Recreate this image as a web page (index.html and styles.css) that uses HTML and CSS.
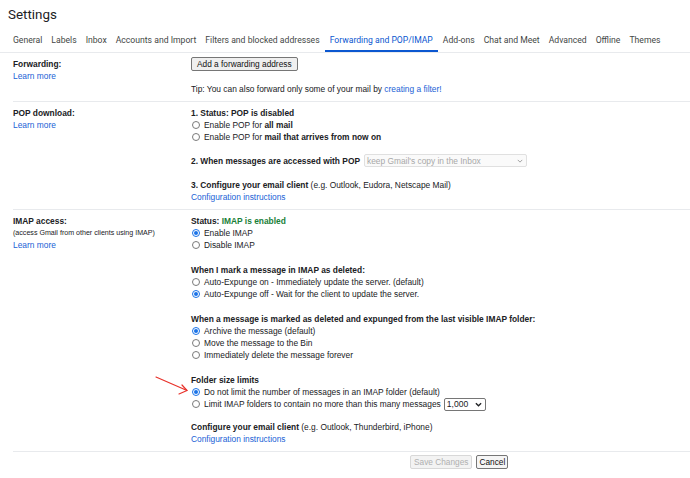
FILE: index.html
```html
<!DOCTYPE html>
<html lang="en">
<head>
<meta charset="utf-8">
<title>Settings</title>
<link rel="stylesheet" href="styles.css">
</head>
<body>
<div class="page">
  <h1 class="title">Settings</h1>
  <nav class="tabs">
    <span class="tab">General</span>
    <span class="tab">Labels</span>
    <span class="tab">Inbox</span>
    <span class="tab">Accounts and Import</span>
    <span class="tab">Filters and blocked addresses</span>
    <span class="tab active">Forwarding and POP/IMAP</span>
    <span class="tab">Add-ons</span>
    <span class="tab">Chat and Meet</span>
    <span class="tab">Advanced</span>
    <span class="tab">Offline</span>
    <span class="tab">Themes</span>
  </nav>

  <section class="row fwd">
    <div class="label">
      <div class="b">Forwarding:</div>
      <a class="link">Learn more</a>
    </div>
    <div class="content">
      <div class="group"><button class="btn">Add a forwarding address</button></div>
      <div class="group"><div>Tip: You can also forward only some of your mail by <a class="link">creating a filter!</a></div></div>
    </div>
  </section>

  <section class="row pop">
    <div class="label">
      <div class="b">POP download:</div>
      <a class="link">Learn more</a>
    </div>
    <div class="content">
      <div class="group">
        <div class="b">1. Status: POP is disabled</div>
        <label class="opt"><span class="radio"></span><span>Enable POP for <b>all mail</b></span></label>
        <label class="opt"><span class="radio"></span><span>Enable POP for <b>mail that arrives from now on</b></span></label>
      </div>
      <div class="group">
        <div class="selrow"><b>2. When messages are accessed with POP</b><span class="select disabled wide">keep Gmail's copy in the Inbox<svg class="chev" viewBox="0 0 8 5" width="6" height="4"><path d="M1 1l3 3 3-3" fill="none" stroke="currentColor" stroke-width="1.2"/></svg></span></div>
      </div>
      <div class="group">
        <div><b>3. Configure your email client</b> (e.g. Outlook, Eudora, Netscape Mail)</div>
        <a class="link">Configuration instructions</a>
      </div>
    </div>
  </section>

  <section class="row imap">
    <div class="label">
      <div class="b">IMAP access:</div>
      <div class="small">(access Gmail from other clients using IMAP)</div>
      <a class="link">Learn more</a>
    </div>
    <div class="content">
      <div class="group">
        <div><b>Status: <span class="green">IMAP is enabled</span></b></div>
        <label class="opt"><span class="radio on"></span><span>Enable IMAP</span></label>
        <label class="opt"><span class="radio"></span><span>Disable IMAP</span></label>
      </div>
      <div class="group">
        <div class="b">When I mark a message in IMAP as deleted:</div>
        <label class="opt"><span class="radio"></span><span>Auto-Expunge on - Immediately update the server. (default)</span></label>
        <label class="opt"><span class="radio on"></span><span>Auto-Expunge off - Wait for the client to update the server.</span></label>
      </div>
      <div class="group">
        <div class="b">When a message is marked as deleted and expunged from the last visible IMAP folder:</div>
        <label class="opt"><span class="radio on"></span><span>Archive the message (default)</span></label>
        <label class="opt"><span class="radio"></span><span>Move the message to the Bin</span></label>
        <label class="opt"><span class="radio"></span><span>Immediately delete the message forever</span></label>
      </div>
      <div class="group">
        <div class="b">Folder size limits</div>
        <label class="opt"><span class="radio on"></span><span>Do not limit the number of messages in an IMAP folder (default)</span></label>
        <label class="opt"><span class="radio"></span><span>Limit IMAP folders to contain no more than this many messages</span><span class="select small-sel">1,000<svg class="chev dark" viewBox="0 0 8 5" width="7" height="5"><path d="M1 1l3 3 3-3" fill="none" stroke="currentColor" stroke-width="1.5"/></svg></span></label>
      </div>
      <div class="group last">
        <div><b>Configure your email client</b> (e.g. Outlook, Thunderbird, iPhone)</div>
        <a class="link">Configuration instructions</a>
      </div>
    </div>
  </section>

  <div class="footer">
    <button class="btn disabled">Save Changes</button>
    <button class="btn cancel">Cancel</button>
  </div>

  <svg class="arrow" width="40" height="22" viewBox="0 0 40 22">
    <path d="M2 2L33 15.5" fill="none" stroke="#e8312a" stroke-width="1.2" stroke-linecap="round"/>
    <path d="M25 19L33 15.5L28 10" fill="none" stroke="#e8312a" stroke-width="1.2" stroke-linecap="round" stroke-linejoin="round"/>
  </svg>
</div>
</body>
</html>
```

FILE: styles.css
```css
html, body {
  margin: 0;
  padding: 0;
  background: #fff;
}
body {
  font-family: "Liberation Sans", Arial, sans-serif;
  font-size: 8.4px;
  color: #202124;
}
.page {
  position: relative;
  width: 690px;
  height: 478px;
  overflow: hidden;
}
.title {
  margin: 0;
  padding: 6px 0 0 8px;
  height: 18px;
  font-family: Roboto, "Liberation Sans", sans-serif;
  font-weight: 400;
  font-size: 13.4px;
  line-height: 18px;
  color: #202124;
}
.tabs {
  display: flex;
  gap: 9px;
  padding: 0 0 0 13px;
  border-bottom: 1px solid #e8eaed;
  height: 29px;
  box-sizing: border-box;
  white-space: nowrap;
}
.tab {
  font-family: Roboto, "Liberation Sans", sans-serif;
  font-size: 8.65px;
  line-height: 12px;
  padding-top: 10px;
  color: #444746;
  border-bottom: 2px solid transparent;
  box-sizing: border-box;
  height: 28px;
}
.tab.active {
  color: #0b57d0;
  border-bottom-color: #0b57d0;
  margin: 0 -4px;
  padding: 10px 5px 0;
}
.row {
  display: grid;
  grid-template-columns: 178px 1fr;
  margin-left: 13px;
  padding: 5px 0 6px;
  border-bottom: 1px solid #e8eaed;
  line-height: 12px;
}
.row.fwd {
  padding-top: 4px;
}
.row.fwd .label {
  padding-top: 1px;
}
.b, b {
  font-weight: 700;
}
.label {
  display: flex;
  flex-direction: column;
  align-items: flex-start;
}
.small {
  font-size: 7.1px;
}
.link {
  color: #1a5fd6;
  text-decoration: none;
}
.content {
  display: flex;
  flex-direction: column;
  gap: 12px;
  white-space: nowrap;
}
.pop .content {
  gap: 11px;
}
.pop .content .group:last-child {
  margin-top: 1px;
}
.imap .content {
  gap: 13px;
}
.imap .content .group.last {
  margin-top: -2px;
}
.group {
  display: flex;
  flex-direction: column;
  align-items: flex-start;
}
.green {
  color: #188038;
}
.opt {
  display: flex;
  align-items: center;
  height: 12px;
}
.radio {
  width: 6px;
  height: 6px;
  border: 1px solid #7a7a7a;
  border-radius: 50%;
  margin: 0 4px 0 1px;
  box-sizing: content-box;
  flex: none;
  position: relative;
  background: #fff;
}
.radio.on {
  border-color: #1a73e8;
}
.radio.on::after {
  content: "";
  position: absolute;
  left: 1px;
  top: 1px;
  width: 4px;
  height: 4px;
  border-radius: 50%;
  background: #1a73e8;
}
.btn {
  font-family: "Liberation Sans", Arial, sans-serif;
  font-size: 8.3px;
  line-height: 12px;
  padding: 0 5px;
  border: 1px solid #767676;
  border-radius: 2px;
  background: #efefef;
  color: #111;
  height: 14px;
  margin: 0;
}
.btn.disabled {
  color: #b0b0b0;
  border-color: #d8d8d8;
  background: #f3f3f3;
  padding: 0 3px;
}
.btn.cancel {
  background: #f5f5f5;
  padding: 0 2px;
}
.selrow {
  display: flex;
  align-items: center;
  height: 13px;
}
.select {
  display: inline-flex;
  align-items: center;
  justify-content: space-between;
  box-sizing: border-box;
  height: 13px;
  border: 1px solid #767676;
  border-radius: 2px;
  padding: 0 3px 0 2px;
  background: #fff;
}
.select.wide {
  width: 163px;
  margin-left: 4px;
}
.select.disabled {
  color: #a8a8a8;
  border-color: #e0e0e0;
  background: #fafafa;
}
.select.small-sel {
  width: 42px;
  margin-left: 3px;
  color: #202124;
  font-size: 8.6px;
}
.chev {
  color: #9a9a9a;
}
.chev.dark {
  color: #202124;
}
.footer {
  display: flex;
  gap: 4px;
  padding: 3px 0 0 410px;
}
.arrow {
  position: absolute;
  left: 154px;
  top: 375px;
}
```
